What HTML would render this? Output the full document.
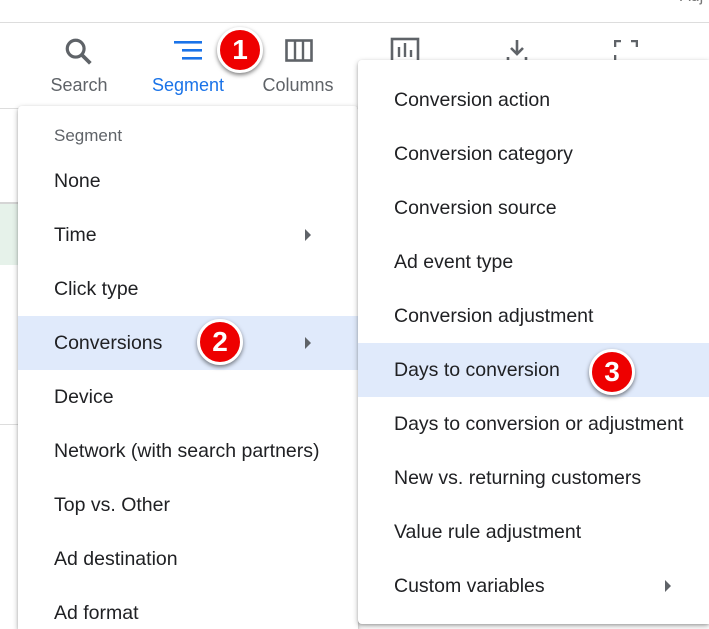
<!DOCTYPE html>
<html><head><style>
html,body{margin:0;width:709px;height:629px;overflow:hidden}
body{background:#fff;font-family:"Liberation Sans",Arial,sans-serif;position:relative}
.abs{position:absolute}
.lbl{position:absolute;top:75px;font-size:18px;color:#5f6368;width:110px;text-align:center}
.menu{position:absolute;background:#fff;border-radius:4px;box-shadow:0 2px 6px rgba(0,0,0,.3),0 1px 2px rgba(0,0,0,.15)}
.it{position:absolute;left:0;right:0;height:54px;line-height:54px;font-size:19.5px;color:#202124;padding-left:36px;white-space:nowrap}
.hl{background:#e0eafb}
.arr{position:absolute;width:0;height:0;border-left:6px solid #5f6368;border-top:6px solid transparent;border-bottom:6px solid transparent}
.badge{position:absolute;width:40px;height:40px;border-radius:50%;background:#e00;border:3px solid #fff;box-shadow:0 2px 4px rgba(0,0,0,.5);color:#fff;font-weight:bold;font-size:28px;line-height:40px;text-align:center}
</style></head><body>
<div class="abs" style="left:0;right:0;top:22px;height:1px;background:#ddd"></div>
<div class="abs" style="left:680px;top:-12px;font-size:16px;color:#777">Adj</div>
<div class="abs" style="left:0;right:0;top:108px;height:1px;background:#ddd"></div>
<div class="abs" style="left:0;width:20px;top:202px;height:61px;background:#e6f2ea;border-top:2px solid #d5d5d5"></div>
<div class="abs" style="left:0;width:20px;top:424px;height:1px;background:#ddd"></div>
<svg class="abs" style="left:63px;top:36px" width="32" height="32" viewBox="0 0 24 24"><circle cx="9.5" cy="9.5" r="6.3" fill="none" stroke="#5f6368" stroke-width="2.4"/><path d="M14 14l6.5 6.5" stroke="#5f6368" stroke-width="2.8"/></svg>
<svg class="abs" style="left:174px;top:40px" width="30" height="22" viewBox="0 0 30 22"><rect x="0" y="1" width="28" height="2.6" fill="#1a73e8"/><rect x="8" y="9" width="20" height="2.6" fill="#1a73e8"/><rect x="8" y="17" width="20" height="2.6" fill="#1a73e8"/></svg>
<svg class="abs" style="left:285px;top:39px" width="28" height="24" viewBox="0 0 28 24"><rect x="1.5" y="1.5" width="25" height="20" fill="none" stroke="#5f6368" stroke-width="2.6"/><path d="M10 2v19M18 2v19" stroke="#5f6368" stroke-width="2.4"/></svg>
<svg class="abs" style="left:390px;top:37px" width="30" height="23" viewBox="0 0 30 23"><rect x="2" y="2" width="26" height="26" fill="none" stroke="#5f6368" stroke-width="2.6"/><path d="M9 10v10M15 6v14M21 13v7" stroke="#5f6368" stroke-width="2.4"/></svg>
<svg class="abs" style="left:505px;top:40px" width="24" height="20" viewBox="0 0 24 20"><path d="M12 0v13M6 8l6 6 6-6" fill="none" stroke="#5f6368" stroke-width="2.6"/><path d="M3 17v3M21 17v3" stroke="#5f6368" stroke-width="2.6"/></svg>
<svg class="abs" style="left:614px;top:40px" width="24" height="20" viewBox="0 0 24 20"><path d="M1 7V1h6M17 1h6v6M1 15v5" fill="none" stroke="#5f6368" stroke-width="2.6"/></svg>
<div class="lbl" style="left:24px">Search</div>
<div class="lbl" style="left:133px;color:#1a73e8">Segment</div>
<div class="lbl" style="left:243px">Columns</div>
<div class="menu" style="left:18px;top:106px;width:340px;height:523px;border-bottom-left-radius:0;border-bottom-right-radius:0">
<div class="it" style="top:3px;font-size:17px;color:#5f6368">Segment</div>
<div class="it" style="top:48px">None</div>
<div class="it" style="top:102px">Time</div>
<div class="it" style="top:156px">Click type</div>
<div class="it hl" style="top:210px">Conversions</div>
<div class="it" style="top:264px">Device</div>
<div class="it" style="top:318px">Network (with search partners)</div>
<div class="it" style="top:372px">Top vs. Other</div>
<div class="it" style="top:426px">Ad destination</div>
<div class="it" style="top:480px;height:43px;line-height:54px;overflow:hidden">Ad format</div>
<div class="arr" style="left:287px;top:123px"></div>
<div class="arr" style="left:287px;top:231px"></div>
</div>
<div class="menu" style="left:358px;top:60px;width:351px;height:564px;border-top-right-radius:0;border-bottom-right-radius:0">
<div class="it" style="top:13px">Conversion action</div>
<div class="it" style="top:67px">Conversion category</div>
<div class="it" style="top:121px">Conversion source</div>
<div class="it" style="top:175px">Ad event type</div>
<div class="it" style="top:229px">Conversion adjustment</div>
<div class="it hl" style="top:283px">Days to conversion</div>
<div class="it" style="top:337px">Days to conversion or adjustment</div>
<div class="it" style="top:391px">New vs. returning customers</div>
<div class="it" style="top:445px">Value rule adjustment</div>
<div class="it" style="top:499px">Custom variables</div>
<div class="arr" style="left:307px;top:520px"></div>
</div>
<div class="badge" style="left:217px;top:27px">1</div>
<div class="badge" style="left:197px;top:319px">2</div>
<div class="badge" style="left:589px;top:349px">3</div>
</body></html>
